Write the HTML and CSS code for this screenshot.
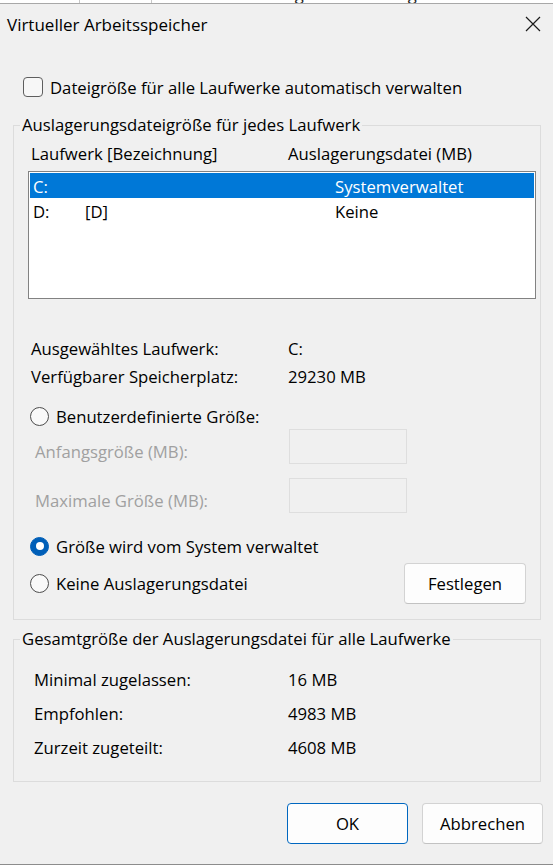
FILE: index.html
```html
<!DOCTYPE html>
<html lang="de">
<head>
    <meta charset="UTF-8">
    <meta name="viewport" content="width=device-width, initial-scale=1.0">
    <title>Virtueller Arbeitsspeicher</title>
    <link rel="stylesheet" href="styles.css">
</head>
<body>
<!-- Reste des Fensters dahinter -->
<div class="behind">
    <span class="behind-tab tab-a">Alle Effekte</span>
    <span class="behind-tab tab-b"></span>
    <span class="behind-tab tab-c">Datenausführungsverhinderung</span>
</div>

<div class="dialog">
    <div class="titlebar">
        <span class="title">Virtueller Arbeitsspeicher</span>
        <span class="close">
            <svg width="16" height="16" viewBox="0 0 16 16"><path d="M1 1L15 15M15 1L1 15" stroke="#1b1b1b" stroke-width="1.2" fill="none"/></svg>
        </span>
    </div>

    <div class="content">
        <label class="auto-row">
            <span class="checkbox"></span>
            <span>Dateigröße für alle Laufwerke automatisch verwalten</span>
        </label>

        <fieldset class="group">
            <legend>Auslagerungsdateigröße für jedes Laufwerk</legend>
            <div class="group-body drives">
                <div class="col-head">
                    <span>Laufwerk [Bezeichnung]</span>
                    <span>Auslagerungsdatei (MB)</span>
                </div>

                <div class="listbox">
                    <div class="drive-row selected">
                        <span>C:</span>
                        <span></span>
                        <span>Systemverwaltet</span>
                    </div>
                    <div class="drive-row">
                        <span>D:</span>
                        <span>[D]</span>
                        <span>Keine</span>
                    </div>
                </div>

                <div class="info">
                    <div class="info-row"><span>Ausgewähltes Laufwerk:</span><span>C:</span></div>
                    <div class="info-row"><span>Verfügbarer Speicherplatz:</span><span>29230 MB</span></div>
                </div>

                <label class="radio-row custom">
                    <span class="radio"></span>
                    <span>Benutzerdefinierte Größe:</span>
                </label>

                <div class="size-row">
                    <span class="size-label">Anfangsgröße (MB):</span>
                    <span class="size-input"></span>
                </div>
                <div class="size-row second">
                    <span class="size-label">Maximale Größe (MB):</span>
                    <span class="size-input"></span>
                </div>

                <label class="radio-row system">
                    <span class="radio checked"></span>
                    <span>Größe wird vom System verwaltet</span>
                </label>

                <div class="last-row">
                    <label class="radio-row">
                        <span class="radio"></span>
                        <span>Keine Auslagerungsdatei</span>
                    </label>
                    <button class="btn btn-set">Festlegen</button>
                </div>
            </div>
        </fieldset>

        <fieldset class="group total">
            <legend>Gesamtgröße der Auslagerungsdatei für alle Laufwerke</legend>
            <div class="group-body totals">
                <div class="total-row"><span>Minimal zugelassen:</span><span>16 MB</span></div>
                <div class="total-row"><span>Empfohlen:</span><span>4983 MB</span></div>
                <div class="total-row"><span>Zurzeit zugeteilt:</span><span>4608 MB</span></div>
            </div>
        </fieldset>

        <div class="buttons">
            <button class="btn btn-default">OK</button>
            <button class="btn">Abbrechen</button>
        </div>
    </div>
</div>
</body>
</html>
```

FILE: styles.css
```css
* {
    box-sizing: border-box;
}

body {
    margin: 0;
    background: #f0f0f0;
    font-family: "Segoe UI", "Open Sans", sans-serif;
    font-size: 16.7px;
    color: #000;
}

/* Fenster im Hintergrund, nur unterer Rand sichtbar */
.behind {
    height: 3px;
    overflow: hidden;
    background: #fff;
    display: flex;
}

.behind-tab {
    display: block;
    line-height: 20px;
    margin-top: -16px;
    white-space: nowrap;
    color: #222;
}

.tab-a {
    width: 88px;
    border-right: 1px solid #c8c8c8;
    margin-left: -8px;
}

.tab-b {
    width: 72px;
    border-right: 1px solid #c8c8c8;
}

.tab-c {
    padding-left: 15px;
}

.dialog {
    height: 862px;
    background: #f0f0f0;
    border-top: 1px solid #a8a8a8;
    border-bottom: 1px solid #8c8c8c;
    display: flex;
    flex-direction: column;
}

.titlebar {
    height: 40px;
    display: flex;
    align-items: center;
    justify-content: space-between;
    padding-left: 7px;
    font-size: 17px;
}

.close {
    width: 40px;
    height: 40px;
    display: flex;
    align-items: center;
    justify-content: center;
}

.content {
    display: flex;
    flex-direction: column;
}

.auto-row {
    display: flex;
    align-items: center;
    gap: 7px;
    height: 26px;
    margin: 30px 0 13px 23px;
}

.checkbox {
    width: 20px;
    height: 20px;
    border: 1px solid #5e5e5e;
    border-radius: 4px;
    background: #f7f7f7;
}

/* Gruppenrahmen */
.group {
    margin: 0 12px 0 13px;
    padding: 0;
    border: 1px solid #dcdcdc;
    min-width: 0;
}

.group legend {
    margin-left: 6px;
    padding: 0 2px;
    line-height: 24px;
}

.group-body.drives {
    padding: 5px 4px 15px 14px;
}

.col-head,
.info-row {
    display: grid;
    grid-template-columns: 257px 1fr;
    padding-left: 3px;
    line-height: 24px;
}

.info-row {
    line-height: 28px;
}

.listbox {
    margin-top: 5px;
    height: 128px;
    border: 1px solid #828282;
    background: #fff;
    padding: 1px;
}

.drive-row {
    display: grid;
    grid-template-columns: 52px 250px 1fr;
    padding-left: 3px;
    height: 25px;
    line-height: 27px;
}

.drive-row.selected {
    background: #0078d7;
    color: #fff;
}

.info {
    margin-top: 36px;
}

.radio-row {
    display: flex;
    align-items: center;
    gap: 7px;
    padding-left: 2px;
    height: 28px;
}

.radio-row.custom {
    margin-top: 13px;
    height: 25px;
}

.radio-row.system {
    margin-top: 19px;
}

.radio {
    width: 19px;
    height: 19px;
    border-radius: 50%;
    border: 1px solid #4d4d4d;
    background: #f9f9f9;
    display: flex;
    align-items: center;
    justify-content: center;
    flex: none;
}

.radio.checked {
    background: #005fb8;
    border-color: #005fb8;
}

.radio.checked::after {
    content: "";
    width: 8px;
    height: 8px;
    border-radius: 50%;
    background: #fff;
}

.size-row {
    display: flex;
    align-items: flex-end;
    padding-left: 7px;
    height: 35px;
    color: #a0a0a0;
}

.size-row.second {
    margin-top: 14px;
}

.size-label {
    width: 254px;
    line-height: 24px;
}

.size-input {
    width: 118px;
    height: 35px;
    border: 1px solid #dedede;
    background: #f0f0f0;
}

.last-row {
    display: flex;
    align-items: center;
    justify-content: space-between;
    margin-top: 3px;
    height: 41px;
    padding-right: 10px;
}

.btn {
    width: 121px;
    height: 41px;
    background: #fdfdfd;
    border: 1px solid #d3d3d3;
    border-bottom-color: #c2c2c2;
    border-radius: 4px;
    font: inherit;
    color: #000;
    padding: 0;
}

.btn-set {
    width: 122px;
}

.btn-default {
    border-color: #0067c0;
}

/* Gesamtgröße */
.group.total {
    margin-top: 7px;
}

.group-body.totals {
    padding: 12px 4px 16px 20px;
}

.total-row {
    display: grid;
    grid-template-columns: 254px 1fr;
    line-height: 34px;
}

.buttons {
    display: flex;
    justify-content: flex-end;
    gap: 14px;
    margin-top: 21px;
    padding-right: 10px;
}
```
